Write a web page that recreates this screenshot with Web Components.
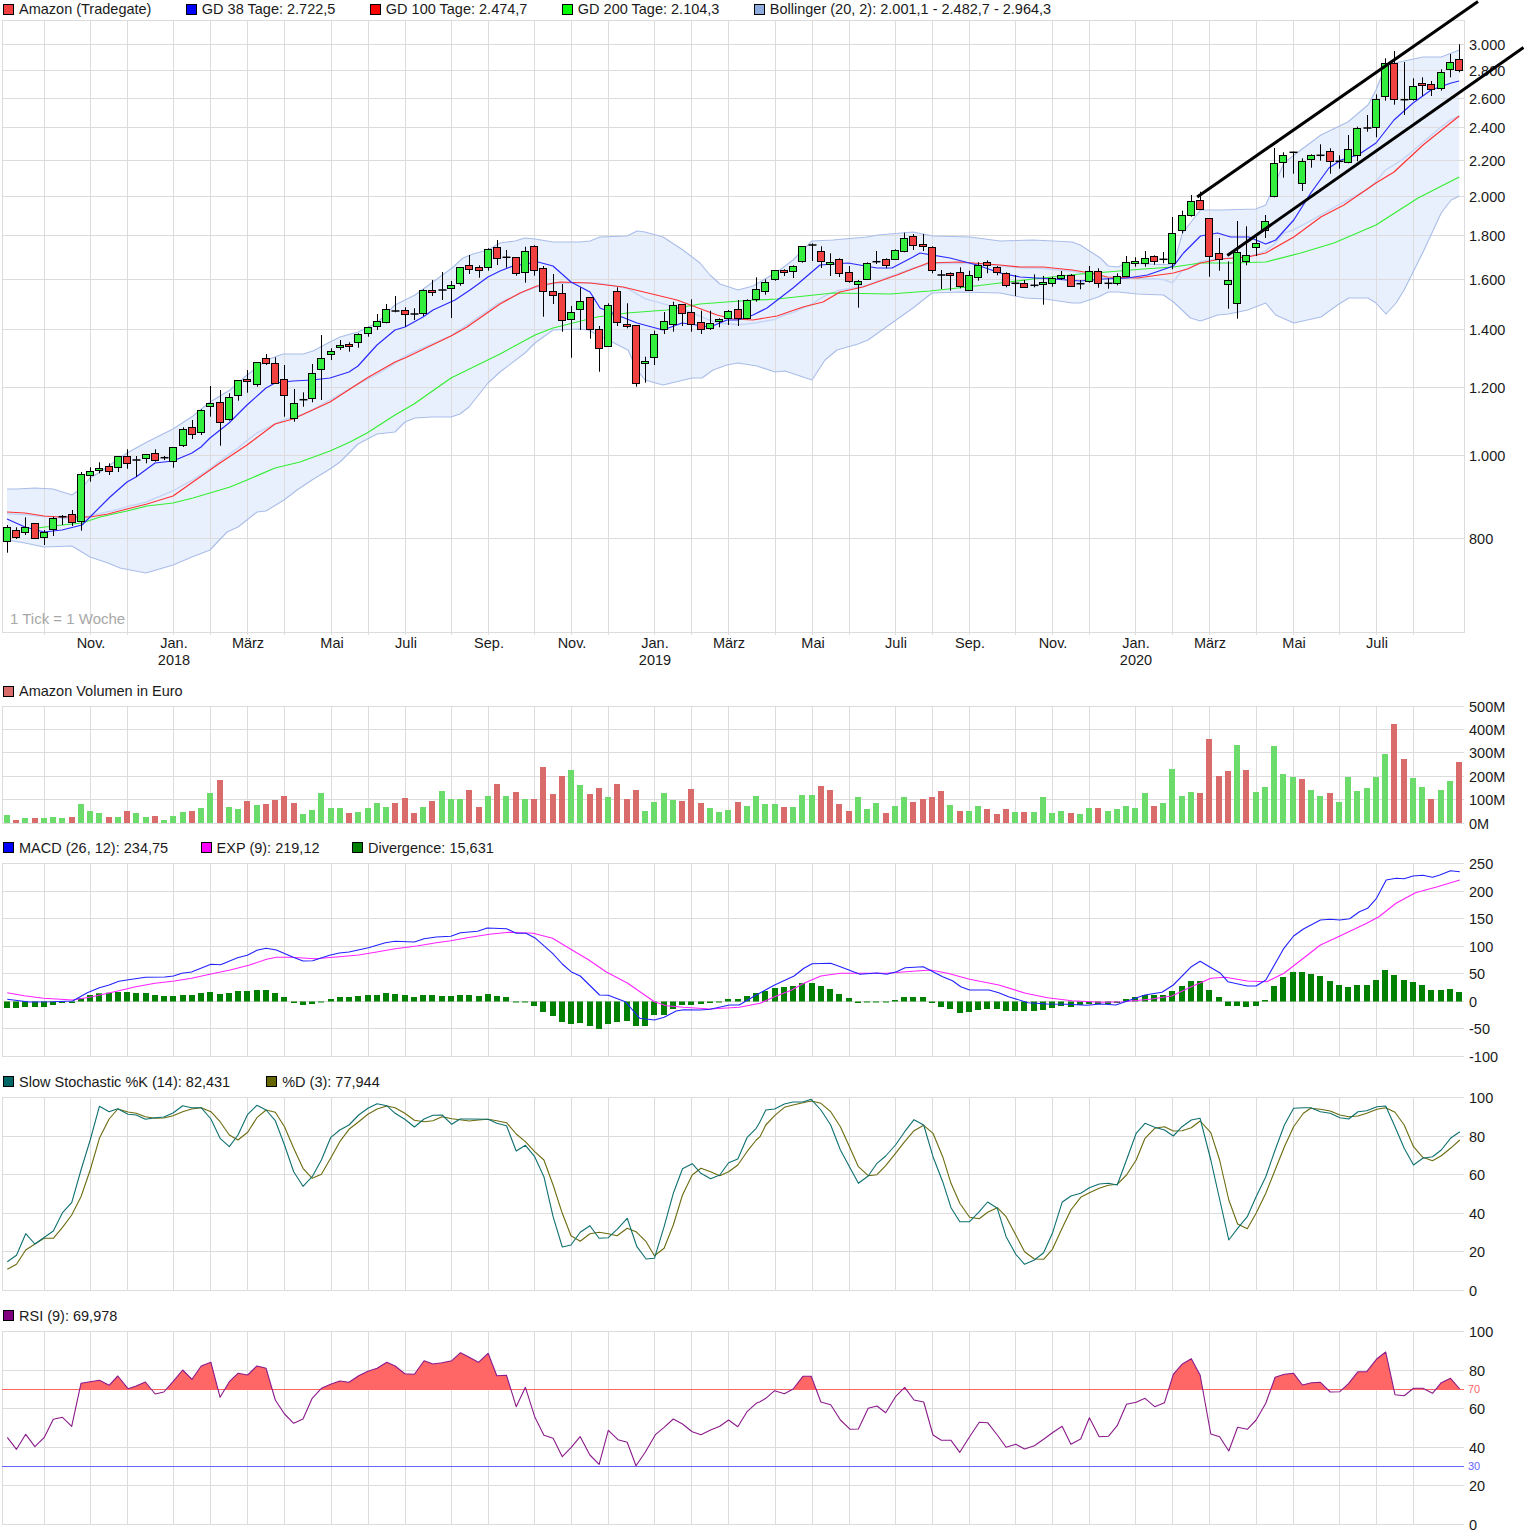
<!DOCTYPE html>
<html lang="de">
<head>
<meta charset="utf-8">
<title>Amazon (Tradegate)</title>
<style>
  html, body { margin: 0; background: #fff; overflow: hidden; }
  body { font-family: "Liberation Sans", Arial, sans-serif; }
</style>
</head>
<body>
<chart-page></chart-page>
<script>
// traced points: x = ox + cx / sx, y = oy + cy / 3
const seg = (ox, sx, oy, a) => {
  const out = [];
  for (let k = 0; k < a.length; k += 2) out.push([ox + a[k] / sx, oy + a[k + 1] / 3]);
  return out;
};
// the part right of x=1000 was traced at 2.992x, not 3x
const real = a => seg(0, 1, 0, a.map((v, k) => k % 2 ? v * 3 : v)).map(p => [p[0] > 1000 ? 1000 + (p[0] - 1000) * 1.00267 : p[0], p[1]]);
const L = (a) => seg(0, 2.063, 1070, a);
const R = (a) => seg(760, 2.052, 1070, a);

const barX = i => 7.3 + 9.25 * i;
const GRID_IDX = [4,9,13,18,22,26,30,35,39,43,48,52,57,61,65,70,74,78,83,87,91,96,100,104,109,113,117,122,126,130,135,139,144,148,152];
const MONTHS = [[9,'Nov.'],[18,'Jan.','2018'],[26,'März'],[35,'Mai'],[43,'Juli'],[52,'Sep.'],[61,'Nov.'],[70,'Jan.','2019'],[78,'März'],[87,'Mai'],[96,'Juli'],[104,'Sep.'],[113,'Nov.'],[122,'Jan.','2020'],[130,'März'],[139,'Mai'],[148,'Juli']];

// candles: kind, wick top, wick bottom, body top, body bottom
const candleRows = (oy, rows) => rows.map(r => [r[0], oy + r[1] / 3, oy + r[2] / 3, oy + r[3] / 3, oy + r[4] / 3]);
const CANDLES = [
  ...candleRows(300, [
    ['g',675,758,682,725],['r',682,717,691,713],['g',652,705,682,697],['r',670,716,670,716],['g',690,735,696,713],
    ['g',650,708,655,688],['d',645,675,650,650],['r',630,678,643,668],['g',516,692,523,665],['g',502,545,514,527],
    ['g',487,520,505,512],['r',490,525,499,514],['g',469,516,469,502],['r',448,506,469,490],['d',468,530,480,480],
    ['g',463,490,463,476],['r',448,485,460,481],['d',468,480,473,473],['g',442,503,442,484],['g',382,441,388,437],
    ['r',360,417,382,403],['g',328,405,331,398],['g',258,350,310,319],['r',270,437,307,367],['g',280,362,292,359],
    ['g',241,302,241,286],['r',210,278,238,244],['g',187,260,187,253],['r',162,195,175,190],['r',172,250,190,250],
    ['r',195,350,238,286],['g',267,365,310,355],['d',277,320,299,299],['g',192,307,220,295],['g',105,300,175,208],
    ['g',145,180,154,163],['g',120,150,136,143],['r',127,155,133,139],['g',100,143,103,127],['g',80,110,82,100],
    ['g',42,90,64,79],['g',12,70,28,67],['d',-12,37,33,33],['r',22,80,31,43],['d',25,60,42,42]
  ]),
  ...candleRows(0, [
    ['g',868,948,871,940],['r',840,888,871,877],['d',816,900,870,870],['g',843,954,856,865],['g',802,857,802,850],
    ['r',765,822,796,808],['r',796,833,802,811],['g',745,812,748,802],['r',720,795,743,775]
  ]),
  ...candleRows(200, [
    ['d',150,203,172,172],['r',172,227,172,220],['g',140,248,155,217],['r',136,227,139,211],['r',198,350,205,274],
    ['r',222,312,274,287],['r',252,395,280,361],['g',318,473,337,358],['g',262,390,304,328],['r',292,416,292,388],
    ['r',378,515,388,445],['g',310,439,316,439],['r',262,378,274,367],['r',310,385,373,380],['r',375,560,376,551],
    ['g',470,548,484,491],['g',392,495,403,472],['g',336,402,364,388],['g',305,395,316,373],['r',313,378,313,340],
    ['r',298,395,337,373],['r',332,402,367,388],['g',332,390,370,385],['g',355,382,358,364],['g',330,375,334,355],
    ['r',300,378,328,355],['g',298,358,301,355],['g',232,305,268,298],['g',238,284,247,274],['g',211,242,211,238],
    ['r',208,228,211,217],['g',196,234,199,214],['g',139,188,139,185],['d',130,183,135,135],['r',139,204,154,184],
    ['g',160,228,187,193],['r',175,231,178,220],['r',198,248,217,244],['g',240,323,244,253],['g',187,240,190,238],
    ['d',153,192,185,185],['r',175,205,178,196],['g',148,180,151,178],['g',98,157,115,154],['r',102,150,109,136],
    ['r',102,153,133,139],['r',139,220,142,211],['d',210,267,225,225],['r',217,272,220,226],['r',202,265,217,260],
    ['g',212,271,226,271],['g',187,242,196,232],['r',181,220,187,196],['r',198,226,202,217]
  ]),
  ...candleRows(0, [
    ['r',817,862,820,856],['d',825,888,850,850],['r',840,864,850,862],['d',823,862,856,856],['g',828,914,847,853],
    ['g',830,860,835,850],['g',813,840,826,835],['r',822,860,826,859],['d',840,868,851,851],['g',798,848,814,844],
    ['r',805,863,814,850],['d',835,866,850,850],['g',820,856,829,850],['g',768,832,787,829],['g',772,800,784,790],
    ['g',753,800,775,790],['r',766,794,769,784],['d',756,790,778,778],['g',651,808,700,790],['g',632,700,646,691],
    ['g',585,650,604,646],['r',575,630,601,628],['r',655,830,655,769],['r',714,812,760,778],['g',784,926,841,853],
    ['g',663,956,757,910],['g',679,796,766,784],['g',711,768,730,742],['g',645,714,664,691],['g',444,592,490,589],
    ['g',457,533,466,487],['d',455,521,457,457],['g',475,573,484,550],['g',463,503,466,478],['d',433,482,466,466],
    ['r',445,521,454,484],['d',466,506,484,484],['g',405,490,448,487],['g',380,484,385,466],['d',345,395,384,384],
    ['g',283,412,298,382],['g',175,302,190,289],['r',153,314,190,298],['d',186,345,299,299],['g',235,302,259,298],
    ['r',232,288,250,256],['r',243,288,253,268],['g',208,272,217,265],['g',162,232,187,208],['r',133,217,178,211]
  ])
];

const BB_UP = real([7,489,17,489,35,488,53,489,72,495,82,488,90,478,100,472,127,453,147,442,173,429,193,416,210,402,230,390,247,375,267,360,283,354,303,354,313,351,330,342,340,337,358,332,377,323,395,305,405,300,415,295,433,282,452,268,463,258,473,254,488,250,500,243,507,242,515,241,525,238,535,239,553,242,580,242,590,241,600,237,627,236,637,231,645,232,663,237,683,250,700,263,710,275,720,284,738,290,753,286,777,272,793,260,812,241,833,240,867,237,878,235,913,232,933,236,970,237,1000,241,1033,240,1072,242,1080,245,1100,258,1108,266,1118,267,1125,263,1173,265,1182,233,1200,210,1220,210,1255,209,1265,205,1273,187,1283,163,1300,150,1320,135,1347,122,1367,105,1375,90,1385,65,1403,61,1422,57,1440,57,1458,50]);
const BB_LO = real([7,540,25,543,44,547,72,546,90,557,108,563,120,568,146,573,173,565,192,557,210,550,227,532,238,527,257,512,266,511,284,500,297,490,312,480,330,469,340,462,358,444,377,434,395,432,405,422,415,418,432,417,451,417,460,414,469,407,488,383,500,372,525,353,535,343,553,330,580,329,588,330,628,350,637,370,645,380,663,385,692,378,702,378,713,370,727,365,738,363,757,366,775,372,785,371,812,380,825,360,837,350,858,344,868,340,882,330,913,308,932,293,960,292,1000,293,1025,298,1045,299,1072,303,1080,303,1098,297,1108,292,1118,292,1137,294,1163,295,1173,302,1190,318,1200,321,1217,315,1228,314,1247,310,1265,303,1275,315,1293,323,1302,321,1320,317,1338,304,1348,298,1367,298,1375,303,1385,314,1395,303,1403,290,1422,252,1440,213,1450,200,1458,196]);
const GD38 = real([7,519,25,527,44,532,62,530,82,525,90,517,110,497,127,482,136,477,155,463,173,461,192,453,201,447,210,438,229,423,247,405,266,388,275,383,293,381,312,380,330,378,349,372,358,366,377,345,395,330,405,327,423,317,433,310,455,300,470,290,488,277,500,271,513,266,538,262,553,266,571,282,590,292,600,308,617,315,637,323,663,330,682,323,710,327,727,320,738,320,753,315,767,308,793,288,820,265,848,263,877,268,892,268,913,257,920,253,950,258,977,265,1000,273,1020,277,1053,279,1080,281,1103,279,1127,278,1147,275,1173,266,1183,253,1200,236,1217,233,1230,237,1248,237,1265,244,1275,240,1293,220,1310,193,1328,168,1340,160,1357,155,1375,143,1393,120,1412,103,1430,90,1450,83,1458,81]);
const GD100 = real([7,512,25,513,44,516,60,517,90,517,108,514,127,509,147,504,173,496,200,477,220,463,247,445,275,424,293,419,330,402,367,378,395,362,405,358,451,336,467,327,500,304,520,293,537,286,560,282,590,283,623,287,677,300,717,315,733,319,753,320,777,316,803,307,823,302,840,292,863,287,897,275,928,263,960,262,1000,265,1020,267,1043,267,1072,270,1090,273,1107,277,1137,278,1173,273,1187,269,1200,263,1220,259,1247,257,1265,253,1293,237,1320,217,1343,205,1375,183,1393,172,1422,145,1458,116]);
const GD200 = real([37,528,62,525,82,523,100,517,127,511,147,506,173,503,193,498,230,487,247,480,275,468,300,462,330,451,350,442,367,433,395,415,414,404,451,378,500,354,535,335,553,328,597,317,627,313,667,310,700,304,740,301,777,299,833,293,890,294,930,291,967,287,1000,283,1033,279,1080,274,1107,272,1143,269,1173,267,1200,263,1233,263,1265,262,1300,253,1333,243,1375,225,1417,198,1458,177]);

const VOL = ['g405','r420','g414','r414','g414','g411','g414','r411','g372','g393','g399','r411','g411','r393','g399','g411','r408','g420','g408','g396','r393','g384','g339','r300','g381','g387','r363','g375','r372','r360','r348','r369','g402','g390','g339','g384','g384','r399','g396','g384','g369','g381','r369','r354','r399','g381','r363','g333','g357','g357','r330','r381','g348','r312','g348','r336','g357','r357','r261','r342','r288','g270','g315','r342','r324','g351','r312','r357','r330','g393','g366','g339','g360','r363','r327','r369','g384','g396','g390','r366','g378','g348','g372','g372','r381','g381','g345','g345','r318','r330','r372','r393','g351','g387','g369','r399','g378','g351','r366','r357','r351','r333','g375','r393','g393','g378','r387','r402','r387','g396','r396','g396','g351','g399','g393','r399','g402','g384','r384','g393','g387','g378','g384','g339','r378','g369','g267','g348','g336','r339','r177','r288','r273','g195','r270','g336','g321','g198','g282','g291','r297','g330','g348','r339','g366','g291','g333','g324','g291','g222','r132','r237','g294','g321','r357','g330','g303','r246'];

const MACD = [
  ...seg(0,2.063,680,[15,958,60,966,110,965,150,963,180,938,205,923,225,915,245,904,265,899,300,892,340,891,358,888,375,880,395,876,435,853,455,854,490,833,510,826,530,811,549,805,570,810,605,832,625,843,645,842,680,826,700,819,720,816,760,803,795,788,815,784,855,786,875,776,900,771,930,769,950,758,985,754,1005,744,1045,746,1065,760,1085,760,1103,773,1140,820,1160,852,1178,875,1197,888,1237,945,1255,946,1290,965,1320,1015,1350,1020,1370,1012,1395,993,1410,989,1445,990,1465,988,1505,975,1525,975,1560,945]),
  ...seg(760,2.052,680,[30,915,70,888,90,865,107,851,145,850,165,860,205,883,240,879,260,883,280,875,298,863,335,860,375,890,395,902,412,920,430,930,470,930,490,938,510,950,550,968,590,972,630,973,670,976,700,972,730,975,770,955,790,945,825,937,848,915,885,860,903,844,945,880,960,905,1000,918,1018,918,1038,900,1075,805,1095,768,1115,747,1150,720,1170,718,1190,720,1210,716,1230,695,1247,685,1265,655,1285,600,1305,595,1322,596,1340,588,1360,586,1380,592,1395,585,1417,572,1436,575])
];
const EXP = [
  ...seg(0,2.063,680,[15,938,50,947,90,955,150,960,190,950,245,932,280,920,320,910,360,903,395,895,435,882,475,870,515,855,550,838,570,832,600,832,650,836,700,830,740,825,780,815,815,806,860,798,900,788,930,782,970,772,1010,763,1050,757,1100,760,1140,775,1180,810,1215,840,1250,875,1295,910,1350,965,1375,977,1410,982,1465,987,1525,982,1568,970]),
  ...seg(760,2.052,680,[30,950,65,930,90,910,125,888,165,880,205,880,260,880,300,875,350,870,385,880,430,898,490,915,545,940,590,953,640,962,700,967,745,965,800,958,845,948,885,920,925,895,955,892,1000,903,1040,905,1075,880,1115,835,1150,795,1190,768,1245,730,1270,710,1305,670,1345,638,1390,620,1436,600])
];
const DIV = [984,984,981,981,981,975,969,969,955,945,940,938,936,936,939,939,945,948,948,945,945,939,936,942,939,933,933,930,930,939,951,969,975,972,966,957,951,951,948,945,945,939,942,945,951,945,945,948,948,945,945,948,942,948,951,966,966,978,996,1008,1026,1032,1029,1038,1047,1032,1026,1023,1038,1038,1005,1005,987,975,975,972,969,966,957,957,948,939,933,924,921,918,909,909,918,927,942,954,969,966,966,966,960,951,951,951,969,981,987,999,996,990,987,987,993,993,993,993,990,984,978,981,975,972,972,972,969,957,951,945,945,945,933,918,903,903,930,951,978,978,981,978,960,918,891,876,876,882,888,903,915,921,915,915,900,870,885,900,906,915,930,930,927,936];

const STOCH_K = [
  ...L([15,575,34,556,53,491,72,522,110,483,129,428,148,398,167,300,186,210,205,109,225,125,243,116,264,133,281,135,300,148,320,143,338,141,357,129,377,107,395,113,415,113,435,147,454,205,473,230,491,195,511,133,530,106,549,120,568,152,587,225,606,305,625,349,644,320,663,270,682,203,701,180,720,165,740,135,759,115,778,101,798,107,815,130,835,148,855,171,875,147,893,136,912,135,932,163,949,147,968,147,1007,148,1025,160,1045,167,1065,243,1084,226,1103,260,1122,320,1141,440,1160,531,1178,525,1197,487,1217,467,1236,505,1255,503,1273,478,1294,445,1314,530,1333,567,1350,565,1370,470,1389,370,1408,296,1428,281,1446,310,1466,326,1485,315,1503,278,1522,267,1541,203,1560,175]),
  ...R([0,155,12,120,30,117,50,102,68,96,88,96,105,88,125,120,145,165,165,240,202,340,222,318,240,280,258,258,278,225,297,185,316,149,336,165,355,260,375,335,392,413,410,455,430,455,450,425,467,396,487,415,505,500,525,553,543,583,563,570,582,548,600,490,620,397,638,378,658,370,676,353,696,342,715,340,733,345,752,270,772,190,790,160,810,172,830,180,848,198,866,170,885,150,903,145,925,270,962,510,980,475,1000,440,1018,380,1038,320,1057,240,1076,165,1095,115,1115,113,1130,113,1150,125,1170,130,1190,143,1208,147,1227,125,1245,122,1266,110,1284,108,1303,170,1322,235,1341,285,1360,265,1380,260,1398,240,1417,205,1436,185])
];
const STOCH_D = [
  ...L([15,598,34,583,53,540,72,522,91,505,110,505,129,472,148,435,167,380,186,300,205,205,225,147,243,117,264,126,281,130,300,140,320,145,338,144,357,137,377,125,395,117,415,113,435,125,454,155,473,195,491,210,511,187,530,143,549,120,568,127,587,170,606,235,625,295,644,325,663,313,682,265,701,215,720,178,740,155,759,133,778,117,798,108,815,113,835,130,855,151,875,155,893,152,912,140,932,146,949,149,968,153,987,150,1007,148,1025,152,1045,158,1065,192,1084,215,1103,245,1122,270,1141,345,1160,430,1178,497,1197,514,1217,491,1236,487,1255,491,1273,497,1294,475,1312,485,1333,515,1350,557,1370,535,1389,465,1408,375,1428,315,1446,295,1466,305,1485,317,1503,305,1522,285,1541,245,1560,210]),
  ...R([0,200,12,165,30,137,50,112,68,105,88,98,105,93,125,100,145,125,165,170,182,225,202,290,222,317,240,314,258,287,278,250,297,215,316,182,336,166,355,190,375,260,392,340,410,400,430,442,450,446,467,427,487,413,505,440,525,495,543,545,563,567,582,568,600,538,620,475,638,420,658,382,676,368,696,355,715,346,733,343,752,315,772,270,790,205,810,175,830,170,848,183,866,182,885,173,903,153,925,188,943,270,962,390,980,462,1000,476,1018,430,1038,370,1057,300,1076,230,1095,170,1115,130,1130,115,1150,118,1170,123,1190,135,1208,140,1227,138,1245,130,1266,118,1284,113,1303,127,1322,165,1341,230,1360,262,1380,272,1398,257,1417,235,1436,210])
];
const RSI = [
  ...L([15,1102,34,1138,53,1093,72,1130,91,1103,110,1048,129,1042,148,1069,167,940,186,935,205,931,225,946,243,918,264,956,281,948,300,936,320,972,338,966,357,935,377,900,396,928,415,888,435,877,454,982,473,935,491,910,511,915,530,888,549,895,568,990,587,1032,606,1060,625,1047,644,985,663,955,682,943,701,933,720,937,740,917,759,904,778,895,798,877,815,888,835,911,855,913,875,872,893,882,912,878,932,872,950,848,968,862,987,877,1007,850,1025,917,1045,916,1065,1010,1084,952,1103,1040,1122,1096,1141,1105,1160,1160,1178,1133,1197,1100,1217,1155,1236,1183,1255,1081,1275,1109,1294,1117,1312,1187,1331,1147,1352,1094,1370,1072,1389,1047,1408,1062,1428,1085,1446,1094,1466,1080,1485,1069,1503,1050,1522,1070,1541,1025,1560,1000]),
  ...R([0,995,12,985,30,962,50,971,68,957,88,919,105,919,125,996,145,1004,165,1050,185,1078,202,1077,222,1015,240,1008,258,1028,278,980,297,952,316,990,336,996,355,1095,372,1111,392,1111,410,1147,430,1100,450,1057,467,1058,487,1095,505,1132,525,1123,543,1137,563,1127,582,1108,600,1088,620,1069,638,1123,658,1107,676,1043,696,1100,715,1099,733,1067,752,1003,772,997,790,985,810,1010,830,998,848,913,866,883,885,866,903,915,925,1092,943,1100,962,1143,980,1072,1000,1078,1018,1050,1038,1000,1057,922,1076,913,1095,910,1113,945,1132,938,1150,937,1170,966,1190,965,1208,940,1227,905,1245,905,1266,866,1284,846,1303,974,1322,977,1341,955,1360,955,1380,970,1398,938,1417,925,1436,957])
];

const f1 = n => Math.round(n * 10) / 10;
const snap = n => Math.floor(n) + .5;
const pathOf = pts => pts.map(p => f1(p[0]) + ',' + f1(p[1])).join(' ');
const line = (pts, color, w = 1.1) => `<polyline points="${pathOf(pts)}" fill="none" stroke="${color}" stroke-width="${w}" stroke-linejoin="round"/>`;
const lerp = (pts, x) => {
  for (let k = 1; k < pts.length; k++) {
    if (x <= pts[k][0]) {
      const t = (x - pts[k - 1][0]) / (pts[k][0] - pts[k - 1][0]);
      return pts[k - 1][1] + t * (pts[k][1] - pts[k - 1][1]);
    }
  }
  return pts[pts.length - 1][1];
};
// price axis is logarithmic: 3.000 at y 44.5, 800 at y 538.5
const LOG_K = 373.7;
const priceAt = y => 3000 * Math.exp((44.5 - y) / LOG_K);
const yAt = p => 44.5 + LOG_K * Math.log(3000 / p);

class LegendItem extends HTMLElement {
  constructor() {
    super();
    this.attachShadow({ mode: "open" });
  }
  connectedCallback() {
    this.shadowRoot.innerHTML = `
    <style>
      :host { display: flex; align-items: center; gap: 5px; white-space: nowrap; }
      i { display: block; width: 9px; height: 9px; border: 1px solid #000; background: ${this.getAttribute("color")}; }
    </style>
    <i></i><slot></slot>`;
  }
}

class ChartPanel extends HTMLElement {
  constructor() {
    super();
    this.attachShadow({ mode: "open" });
  }
  // overridden per panel
  get box() { return [0, 0]; }
  get rows() { return []; }   // [y, label]
  get plotTop() { return 0; }
  get plotBottom() { return 0; }
  get legendHeight() { return 17; }
  get legendGap() { return 33; }
  underGrid() { return ""; }
  plot() { return ""; }
  over() { return ""; }

  connectedCallback() {
    const [top, height] = this.box;
    const grid = [];
    const lines = [this.plotTop, ...this.rows.map(r => r[0]), this.plotBottom];
    [...new Set(lines)].forEach(y => grid.push(`<line x1="2" x2="1464" y1="${y}" y2="${y}"/>`));
    [2.5, ...GRID_IDX.map(i => snap(barX(i)))].forEach(x =>
      grid.push(`<line x1="${x}" x2="${x}" y1="${this.plotTop}" y2="${this.plotBottom}"/>`));
    const labels = this.rows.map(r => `<text x="1469" y="${r[0] + 5}">${r[1]}</text>`).join("");
    this.shadowRoot.innerHTML = `
    <style>
      :host { display: block; font: 14.5px "Liberation Sans", Arial, sans-serif; color: #1a1a1a; }
      .legend { display: flex; gap: ${this.legendGap}px; height: ${this.legendHeight}px; align-items: center; padding-left: 3px; }
      svg { display: block; overflow: visible; }
      text { font: 14.5px "Liberation Sans", Arial, sans-serif; fill: #1a1a1a; }
      .grid line { stroke: #dcdcdc; stroke-width: 1; }
    </style>
    <div class="legend"><slot></slot></div>
    <svg width="1524" height="${height}" viewBox="0 ${top} 1524 ${height}">
      ${this.underGrid()}
      <g class="grid">${grid.join("")}</g>
      ${labels}
      ${this.plot()}
      ${this.over()}
    </svg>`;
  }
}

class PricePanel extends ChartPanel {
  get box() { return [18, 665]; }
  get legendHeight() { return 18; }
  get legendGap() { return 34.4; }
  get plotTop() { return 20.5; }
  get plotBottom() { return 632.5; }
  get rows() {
    return [[44.5,"3.000"],[70.5,"2.800"],[98.5,"2.600"],[127.5,"2.400"],[160.5,"2.200"],[196.5,"2.000"],[235.5,"1.800"],[279.5,"1.600"],[329.5,"1.400"],[387.5,"1.200"],[455.5,"1.000"],[538.5,"800"]];
  }
  underGrid() {
    const mid = [];
    for (let x = 7; x <= 1459.6; x += 9.25) mid.push([x, yAt((priceAt(lerp(BB_UP, x)) + priceAt(lerp(BB_LO, x))) / 2)]);
    this._mid = mid;
    return `<polygon points="${pathOf([...BB_UP, ...[...BB_LO].reverse()])}" fill="#e9f0fd"/>`;
  }
  plot() {
    const axis = MONTHS.map(m => {
      const x = snap(barX(m[0])) + .5;
      return `<text text-anchor="middle" x="${x}" y="648">${m[1]}</text>` +
        (m[2] ? `<text text-anchor="middle" x="${x}" y="665">${m[2]}</text>` : "");
    }).join("");
    const ticks = GRID_IDX.map(i => {
      const x = snap(barX(i));
      return `<line x1="${x}" x2="${x}" y1="632" y2="635" stroke="#dcdcdc"/>`;
    }).join("");
    return `<line x1="1464.5" x2="1464.5" y1="20" y2="633" stroke="#dcdcdc"/>${ticks}
      ${line(BB_UP, "#a9bde9")}${line(BB_LO, "#a9bde9")}${line(this._mid, "#c6d6f6", 1.5)}
      ${line(GD200, "#33ee33", 1.2)}${line(GD100, "#ff3333", 1.2)}${line(GD38, "#2a2aff", 1.2)}
      <text x="10" y="624" style="fill:#a8a8a8;font-size:15px">1 Tick = 1 Woche</text>
      ${axis}${CANDLES.map((c, i) => this.candle(c, i)).join("")}`;
  }
  candle(c, i) {
    const x = snap(barX(i));
    const wick = `<line x1="${x}" x2="${x}" y1="${f1(c[1])}" y2="${f1(c[2])}" stroke="#000"/>`;
    if (c[0] === "d") return wick + `<line x1="${x - 4}" x2="${x + 4}" y1="${f1(c[3])}" y2="${f1(c[3])}" stroke="#000" stroke-width="1.5"/>`;
    const top = snap(c[3]), bottom = Math.max(snap(c[4]), top + 1);
    return wick + `<rect x="${x - 4}" y="${top}" width="7" height="${bottom - top}" fill="${c[0] === "g" ? "#33ee3d" : "#f04040"}" stroke="#000"/>`;
  }
  over() {
    return `<line x1="1197.2" y1="197" x2="1478" y2="1.5" stroke="#000" stroke-width="3"/>
      <line x1="1227.3" y1="255.5" x2="1523.5" y2="47.5" stroke="#000" stroke-width="3"/>`;
  }
}

class VolumePanel extends ChartPanel {
  get box() { return [699, 141]; }
  get legendHeight() { return 16; }
  get plotTop() { return 706.5; }
  get plotBottom() { return 823.5; }
  get rows() { return [[706.5,"500M"],[729.5,"400M"],[752.5,"300M"],[776.5,"200M"],[799.5,"100M"],[823.5,"0M"]]; }
  plot() {
    return VOL.map((v, i) => {
      const top = 680 + +v.slice(1) / 3;
      return `<rect x="${Math.floor(barX(i)) - 3}" y="${f1(top)}" width="6" height="${f1(823 - top)}" fill="${v[0] === "g" ? "#6bdc6b" : "#d96b6b"}"/>`;
    }).join("");
  }
}

class MacdPanel extends ChartPanel {
  get box() { return [855, 218]; }
  get legendHeight() { return 15; }
  get legendGap() { return 32.5; }
  get plotTop() { return 863.5; }
  get plotBottom() { return 1056.5; }
  get rows() { return [[863.5,"250"],[891.5,"200"],[918.5,"150"],[946.5,"100"],[973.5,"50"],[1001.5,"0"],[1028.5,"-50"],[1056.5,"-100"]]; }
  plot() {
    const base = 1001.5;
    const bars = DIV.map((v, i) => {
      const y = 680 + v / 3;
      const top = Math.min(y, base), h = Math.max(Math.abs(y - base), 1);
      return `<rect x="${Math.floor(barX(i)) - 3}" y="${f1(top)}" width="6" height="${f1(h)}" fill="#008000"/>`;
    }).join("");
    return bars + line(EXP, "#ff22ff") + line(MACD, "#2222ff");
  }
}

class StochPanel extends ChartPanel {
  get box() { return [1090, 217]; }
  get legendGap() { return 36; }
  get plotTop() { return 1097.5; }
  get plotBottom() { return 1290.5; }
  get rows() { return [[1097.5,"100"],[1136.5,"80"],[1174.5,"60"],[1213.5,"40"],[1251.5,"20"],[1290.5,"0"]]; }
  plot() { return line(STOCH_D, "#6b6b10") + line(STOCH_K, "#0f7070"); }
}

class RsiPanel extends ChartPanel {
  get box() { return [1324, 216]; }
  get plotTop() { return 1331.5; }
  get plotBottom() { return 1524.5; }
  get rows() { return [[1331.5,"100"],[1370.5,"80"],[1408.5,"60"],[1447.5,"40"],[1485.5,"20"],[1524.5,"0"]]; }
  plot() {
    const area = [...RSI, [RSI[RSI.length - 1][0], 1389.5], [RSI[0][0], 1389.5]];
    return `<clipPath id="above70"><rect x="0" y="1320" width="1524" height="69.5"/></clipPath>
      <polygon points="${pathOf(area)}" fill="#ff6666" clip-path="url(#above70)"/>
      <line x1="2" x2="1464" y1="1389.5" y2="1389.5" stroke="#ff6666"/>
      <line x1="2" x2="1464" y1="1466.5" y2="1466.5" stroke="#6666ff"/>
      <text x="1468" y="1393" style="font-size:11px;fill:#ff6666">70</text>
      <text x="1468" y="1470" style="font-size:11px;fill:#6666ff">30</text>
      ${line(RSI, "#8b1a8b")}`;
  }
}

class ChartPage extends HTMLElement {
  constructor() {
    super();
    this.attachShadow({ mode: "open" });
  }
  connectedCallback() {
    this.shadowRoot.innerHTML = `
    <style>:host { display: block; width: 1524px; height: 1540px; overflow: hidden; }</style>
    <price-panel>
      <legend-item color="#f04040">Amazon (Tradegate)</legend-item>
      <legend-item color="#0000ff">GD 38 Tage: 2.722,5</legend-item>
      <legend-item color="#ff0000">GD 100 Tage: 2.474,7</legend-item>
      <legend-item color="#00ff00">GD 200 Tage: 2.104,3</legend-item>
      <legend-item color="#8faadc">Bollinger (20, 2): 2.001,1 - 2.482,7 - 2.964,3</legend-item>
    </price-panel>
    <volume-panel><legend-item color="#d96b6b">Amazon Volumen in Euro</legend-item></volume-panel>
    <macd-panel>
      <legend-item color="#0000ff">MACD (26, 12): 234,75</legend-item>
      <legend-item color="#ff00ff">EXP (9): 219,12</legend-item>
      <legend-item color="#008000">Divergence: 15,631</legend-item>
    </macd-panel>
    <stoch-panel>
      <legend-item color="#006666">Slow Stochastic %K (14): 82,431</legend-item>
      <legend-item color="#666600">%D (3): 77,944</legend-item>
    </stoch-panel>
    <rsi-panel><legend-item color="#800080">RSI (9): 69,978</legend-item></rsi-panel>`;
  }
}

customElements.define("legend-item", LegendItem);
customElements.define("price-panel", PricePanel);
customElements.define("volume-panel", VolumePanel);
customElements.define("macd-panel", MacdPanel);
customElements.define("stoch-panel", StochPanel);
customElements.define("rsi-panel", RsiPanel);
customElements.define("chart-page", ChartPage);
</script>
</body>
</html>
